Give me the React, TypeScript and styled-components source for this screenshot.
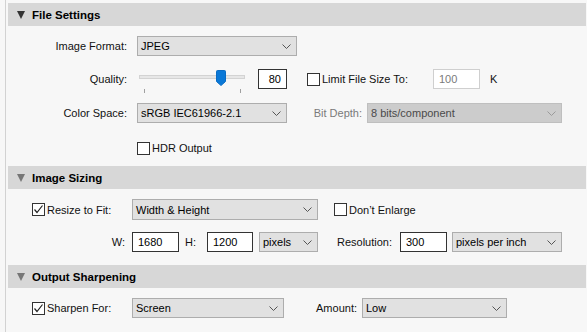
import React from "react";
import styled, { createGlobalStyle } from "styled-components";

const Global = createGlobalStyle`
  html, body { margin: 0; padding: 0; background: #f7f7f7; }
  body {
    font-family: "Liberation Sans", Arial, sans-serif;
    font-size: 11px;
    color: #111;
  }
  * { box-sizing: border-box; }
`;

const Page = styled.div`
  width: 587px;
  height: 332px;
  overflow: hidden;
  display: flex;
  padding-left: 5px;
  background: #f7f7f7;
`;

const Panel = styled.div`
  flex: 1;
  border-left: 1px solid #d2d2d2;
  padding: 3px 1px 0 2px;
  display: flex;
  flex-direction: column;
`;

const Header = styled.div`
  flex-shrink: 0;
  height: 23px;
  background: #d7d7d7;
  display: flex;
  align-items: center;
  padding-left: 9px;
  gap: 7px;
  font-weight: bold;
  font-size: 11.5px;
  color: #000;
`;

const Tri = styled.span<{ $muted?: boolean }>`
  width: 0;
  height: 0;
  border-left: 4.5px solid transparent;
  border-right: 4.5px solid transparent;
  border-top: 8px solid ${(p) => (p.$muted ? "#767676" : "#333")};
  margin-top: 1px;
`;

const Body = styled.div<{ $h: number }>`
  flex-shrink: 0;
  height: ${(p) => p.$h}px;
  padding-top: 10px;
  display: flex;
  flex-direction: column;
`;

const Row = styled.div<{ $mt?: number; $h?: number }>`
  display: flex;
  align-items: center;
  height: ${(p) => p.$h ?? 20}px;
  margin-top: ${(p) => p.$mt ?? 0}px;
`;

const Label = styled.span<{ $w: number; $align?: string; $pr?: number; $pl?: number; $dim?: boolean }>`
  flex-shrink: 0;
  width: ${(p) => p.$w}px;
  text-align: ${(p) => p.$align ?? "right"};
  padding-right: ${(p) => p.$pr ?? 0}px;
  padding-left: ${(p) => p.$pl ?? 0}px;
  white-space: nowrap;
  color: ${(p) => (p.$dim ? "#7a7a7a" : "#111")};
`;

const SelectBox = styled.div<{ $w: number; $ml?: number; $disabled?: boolean; $h?: number }>`
  flex-shrink: 0;
  width: ${(p) => p.$w}px;
  height: ${(p) => p.$h ?? 20}px;
  margin-left: ${(p) => p.$ml ?? 0}px;
  background: ${(p) => (p.$disabled ? "#cccccc" : "#e1e1e1")};
  border: 1px solid ${(p) => (p.$disabled ? "#bfbfbf" : "#adadad")};
  color: ${(p) => (p.$disabled ? "#4a4a4a" : "#000")};
  display: flex;
  align-items: center;
  justify-content: space-between;
  padding: 0 5px 0 3px;
  white-space: nowrap;
`;

const TextBox = styled.div<{ $w: number; $ml?: number; $align?: string; $disabled?: boolean }>`
  flex-shrink: 0;
  width: ${(p) => p.$w}px;
  height: 20px;
  margin-left: ${(p) => p.$ml ?? 0}px;
  background: #fff;
  border: 1px solid ${(p) => (p.$disabled ? "#cfcfcf" : "#333")};
  color: ${(p) => (p.$disabled ? "#7a7a7a" : "#000")};
  display: flex;
  align-items: center;
  justify-content: ${(p) => (p.$align === "right" ? "flex-end" : "flex-start")};
  padding: 0 5px;
`;

const Box = styled.span<{ $ml?: number }>`
  flex-shrink: 0;
  width: 13px;
  height: 13px;
  margin-left: ${(p) => p.$ml ?? 0}px;
  border: 1px solid #333;
  background: #fff;
  display: flex;
  align-items: center;
  justify-content: center;
`;

const CheckText = styled.span<{ $w?: number }>`
  padding-left: 2px;
  white-space: nowrap;
  flex-shrink: 0;
  width: ${(p) => (p.$w ? `${p.$w}px` : "auto")};
`;

const SliderWrap = styled.div<{ $ml?: number }>`
  position: relative;
  flex-shrink: 0;
  width: 112px;
  height: 20px;
  margin-left: ${(p) => p.$ml ?? 0}px;
`;

const Track = styled.div`
  position: absolute;
  left: 2px;
  right: 4px;
  top: 6px;
  height: 4px;
  background: #e7e7e7;
  border: 1px solid #d3d3d3;
`;

const Tick = styled.div<{ $x: number }>`
  position: absolute;
  left: ${(p) => p.$x}px;
  top: 20px;
  width: 1px;
  height: 4px;
  background: #a0a0a0;
`;

const Thumb = styled.svg`
  position: absolute;
  left: 79px;
  top: 1px;
`;

const Unit = styled.span<{ $ml?: number }>`
  margin-left: ${(p) => p.$ml ?? 0}px;
`;

const Chevron = ({ dim }: { dim?: boolean }) => (
  <svg width="9" height="5" viewBox="0 0 9 5">
    <polyline points="0.5,0.5 4.5,4.5 8.5,0.5" fill="none" stroke={dim ? "#9a9a9a" : "#555"} strokeWidth="1" />
  </svg>
);

const Check = () => (
  <svg width="11" height="11" viewBox="0 0 11 11">
    <polyline points="1.5,5.5 4,8.5 9.5,1.5" fill="none" stroke="#222" strokeWidth="1.2" />
  </svg>
);

const Select = ({ w, ml, value, disabled, h }: { w: number; ml?: number; value: string; disabled?: boolean; h?: number }) => (
  <SelectBox $w={w} $ml={ml} $disabled={disabled} $h={h}>
    <span>{value}</span>
    <Chevron dim={disabled} />
  </SelectBox>
);

export default function App() {
  return (
    <Page>
      <Global />
      <Panel>
        <Header>
          <Tri />
          File Settings
        </Header>
        <Body $h={140}>
          <Row>
            <Label $w={119}>Image Format:</Label>
            <Select w={160} ml={10} value="JPEG" />
          </Row>
          <Row $mt={13}>
            <Label $w={119}>Quality:</Label>
            <SliderWrap $ml={10}>
              <Track />
              <Tick $x={7} />
              <Tick $x={103} />
              <Thumb width="10" height="16" viewBox="0 0 10 16">
                <path d="M0.5 1.5 Q0.5 0.5 1.5 0.5 L8.5 0.5 Q9.5 0.5 9.5 1.5 L9.5 11.5 L5 15.5 L0.5 11.5 Z" fill="#0a78d7" stroke="#0a6cc4" strokeWidth="1" />
              </Thumb>
            </SliderWrap>
            <TextBox $w={29} $ml={9} $align="right">80</TextBox>
            <Box $ml={20} />
            <CheckText $w={113}>Limit File Size To:</CheckText>
            <TextBox $w={47} $disabled>100</TextBox>
            <Unit $ml={10}>K</Unit>
          </Row>
          <Row $mt={14}>
            <Label $w={119}>Color Space:</Label>
            <Select w={150} ml={10} value="sRGB IEC61966-2.1" />
            <Label $w={75} $dim>Bit Depth:</Label>
            <Select w={195} ml={5} value="8 bits/component" disabled />
          </Row>
          <Row $mt={15}>
            <Box $ml={129} />
            <CheckText>HDR Output</CheckText>
          </Row>
        </Body>

        <Header>
          <Tri $muted />
          Image Sizing
        </Header>
        <Body $h={76}>
          <Row $h={21}>
            <Box $ml={24}>
              <Check />
            </Box>
            <CheckText $w={87}>Resize to Fit:</CheckText>
            <Select w={186} h={21} value="Width & Height" />
            <Box $ml={16} />
            <CheckText>Don’t Enlarge</CheckText>
          </Row>
          <Row $mt={12}>
            <Label $w={124} $pr={7}>W:</Label>
            <TextBox $w={47}>1680</TextBox>
            <Label $w={28} $align="left" $pl={6}>H:</Label>
            <TextBox $w={46}>1200</TextBox>
            <Select w={59} ml={6} value="pixels" />
            <Label $w={82} $pr={8}>Resolution:</Label>
            <TextBox $w={47}>300</TextBox>
            <Select w={110} ml={5} value="pixels per inch" />
          </Row>
        </Body>

        <Header>
          <Tri $muted />
          Output Sharpening
        </Header>
        <Body $h={60}>
          <Row>
            <Box $ml={24}>
              <Check />
            </Box>
            <CheckText $w={87}>Sharpen For:</CheckText>
            <Select w={152} value="Screen" />
            <Label $w={78} $pr={5}>Amount:</Label>
            <Select w={145} value="Low" />
          </Row>
        </Body>
      </Panel>
    </Page>
  );
}
